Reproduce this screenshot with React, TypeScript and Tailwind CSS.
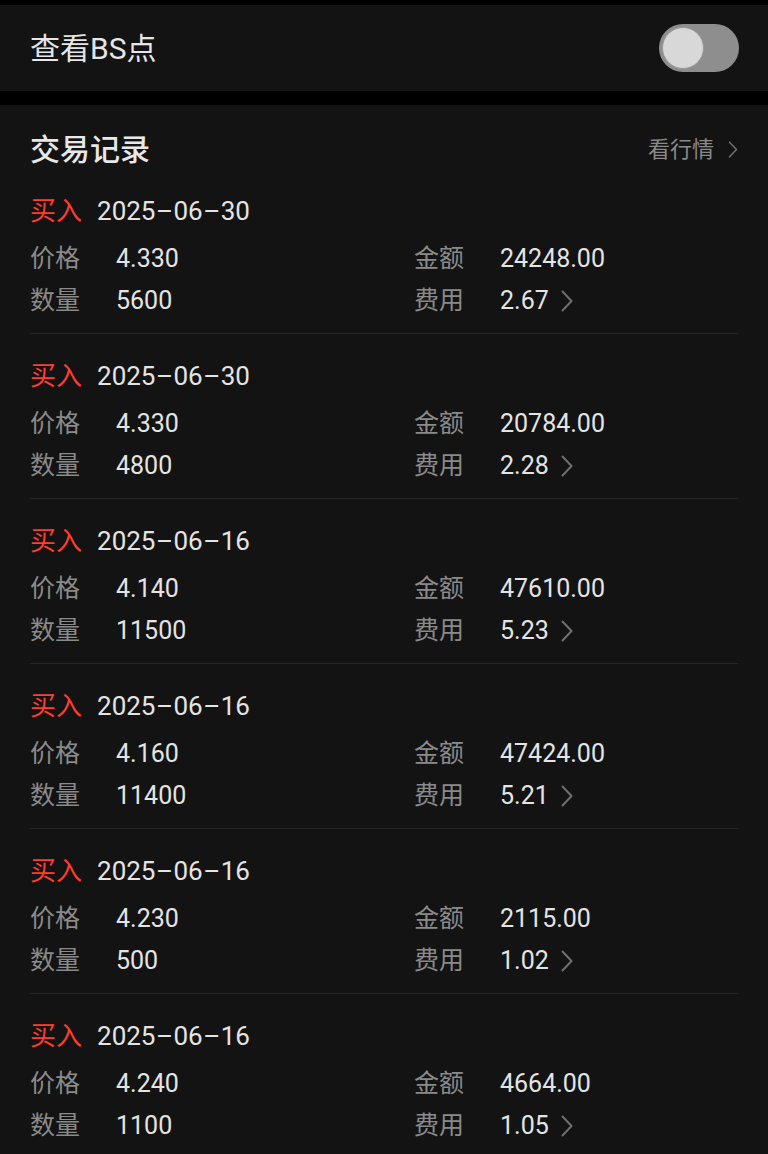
interface TradeRecord {
  side: string
  date: string
  price: string
  qty: string
  amount: string
  fee: string
}

const records: TradeRecord[] = [
  { side: "买入", date: "2025-06-30", price: "4.330", qty: "5600", amount: "24248.00", fee: "2.67" },
  { side: "买入", date: "2025-06-30", price: "4.330", qty: "4800", amount: "20784.00", fee: "2.28" },
  { side: "买入", date: "2025-06-16", price: "4.140", qty: "11500", amount: "47610.00", fee: "5.23" },
  { side: "买入", date: "2025-06-16", price: "4.160", qty: "11400", amount: "47424.00", fee: "5.21" },
  { side: "买入", date: "2025-06-16", price: "4.230", qty: "500", amount: "2115.00", fee: "1.02" },
  { side: "买入", date: "2025-06-16", price: "4.240", qty: "1100", amount: "4664.00", fee: "1.05" },
]

const font = { fontFamily: "Roboto, 'Noto Sans CJK SC', sans-serif" }

const Chevron = ({ className }: { className?: string }) => (
  <svg viewBox="0 0 12 22" className={className} fill="none" stroke="currentColor" strokeWidth={2}>
    <polyline points="1.5,1.5 10.5,11 1.5,20.5" strokeLinecap="round" strokeLinejoin="round" />
  </svg>
)

function Field({ label, value, chevron }: { label: string; value: string; chevron?: boolean }) {
  return (
    <div className="flex items-center h-[42px]">
      <span className="w-[86px] text-[25px] text-[#8a8a8a]">{label}</span>
      <span className="text-[25px] text-[#e4e4e4]">{value}</span>
      {chevron && <Chevron className="w-[12px] h-[22px] ml-[12px] text-[#6f6f6f]" />}
    </div>
  )
}

function DateText({ date }: { date: string }) {
  const parts = date.split("-")
  return (
    <span className="text-[26px] text-[#e4e4e4] flex items-center">
      {parts.map((p, i) => (
        <span key={i} className="flex items-center">
          {i > 0 && <span className="inline-block w-[18px] text-center">–</span>}
          {p}
        </span>
      ))}
    </span>
  )
}

function RecordItem({ item }: { item: TradeRecord }) {
  return (
    <div className="pt-[21px] pb-[11px] border-b border-[#262626]">
      <div className="flex items-center h-[42px] mb-[6px]">
        <span className="text-[26px] text-[#ff3d2e] mr-[15px]">{item.side}</span>
        <DateText date={item.date} />
      </div>
      <div className="grid grid-cols-[384px_1fr]">
        <Field label="价格" value={item.price} />
        <Field label="金额" value={item.amount} />
        <Field label="数量" value={item.qty} />
        <Field label="费用" value={item.fee} chevron />
      </div>
    </div>
  )
}

export default function App() {
  return (
    <div className="w-[768px] h-[1154px] bg-black overflow-hidden pt-[5px]" style={font}>
      <div className="h-[86px] bg-[#131313] flex items-center justify-between pl-[30px] pr-[29px]">
        <span className="text-[30px] text-[#e6e6e6]">查看BS点</span>
        <div className="w-[80px] h-[48px] rounded-full bg-[#8e8e8e] flex items-center pl-[3px]">
          <div className="w-[42px] h-[42px] rounded-full bg-[#d8d8d8] border border-[#9a9a9a]" />
        </div>
      </div>
      <div className="mt-[14px] bg-[#131313] px-[30px] h-[1100px]">
        <div className="pt-[24px] h-[64px] flex items-center justify-between">
          <span className="text-[30px] font-medium text-[#e8e8e8]">交易记录</span>
          <span className="flex items-center text-[22px] text-[#8a8a8a]">
            看行情
            <Chevron className="w-[10px] h-[17px] ml-[14px] text-[#6f6f6f]" />
          </span>
        </div>
        {records.map((r, i) => (
          <RecordItem key={i} item={r} />
        ))}
      </div>
    </div>
  )
}
